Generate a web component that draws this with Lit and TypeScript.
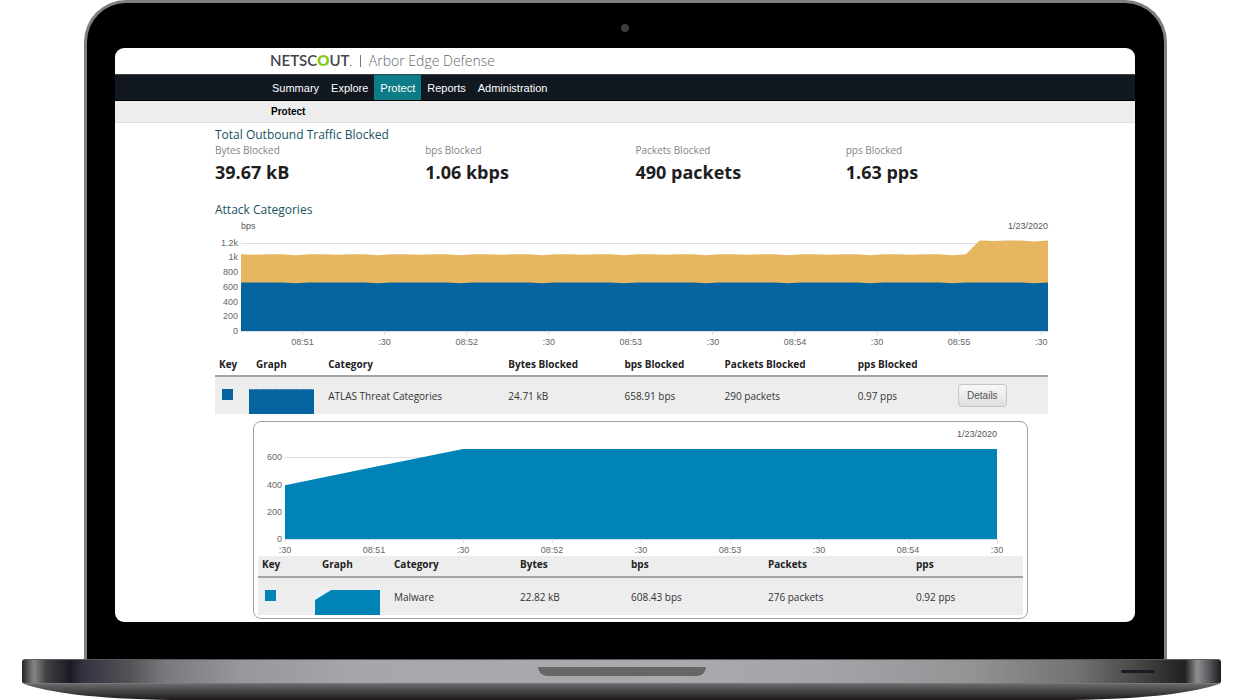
import { LitElement, html, svg, css } from "lit";
import { customElement, property } from "lit/decorators.js";

interface Series {
  color: string;
  values: number[];
}

interface Tick {
  at: number;
  label: string;
}

const NAVY = "#0563a0";
const AMBER = "#e6b660";
const AZURE = "#0083b7";

/* One sample every five seconds; each sixth sample dips a little. */
const atlas = Array.from({ length: 60 }, (_, i) => (i % 6 === 4 ? 646 : 658));
const total = Array.from({ length: 60 }, (_, i) => {
  const base = i >= 54 ? 1226 : 1038;
  return base + (i % 6 === 4 ? -12 : i % 3 === 1 ? -4 : 2);
});
const malware = [395, 528, 661, 661, 661, 661, 661, 661, 661];

function clock(count: number, startMinute: number, onHalf: boolean): string[] {
  const labels: string[] = [];
  let minute = startMinute;
  let half = onHalf;
  for (let i = 0; i < count; i++) {
    if (half) {
      labels.push(":30");
      minute++;
    } else {
      labels.push(`08:${minute}`);
    }
    half = !half;
  }
  return labels;
}

const outboundTicks: Tick[] = clock(10, 51, false).map((label, i) => ({
  label,
  at: (4.5 + i * 6) / 59,
}));
const malwareTicks: Tick[] = clock(9, 50, true).map((label, i) => ({
  label,
  at: i / 8,
}));

function areaPath(values: number[], max: number): string {
  const step = 1000 / (values.length - 1);
  const points = values.map(
    (v, i) => `${(i * step).toFixed(2)} ${(1000 - (v / max) * 1000).toFixed(2)}`
  );
  return `M0 1000L${points.join("L")}L1000 1000Z`;
}

@customElement("area-chart")
class AreaChart extends LitElement {
  static styles = css`
    :host {
      display: block;
      font: 9px/12px "Liberation Sans", Arial, sans-serif;
      color: #555;
    }
    .head {
      display: flex;
      justify-content: space-between;
      height: 20px;
    }
    .plot {
      display: block;
      width: 100%;
      overflow: visible;
    }
    .label {
      fill: #666;
    }
    .end {
      text-anchor: end;
    }
    .middle {
      text-anchor: middle;
    }
    .grid {
      stroke: #dedede;
      shape-rendering: crispEdges;
    }
  `;

  @property() unit = "";
  @property() date = "";
  @property({ type: Number }) max = 100;
  @property({ type: Number }) height = 91;
  @property({ attribute: false }) series: Series[] = [];
  @property({ attribute: false }) levels: Tick[] = [];
  @property({ attribute: false }) ticks: Tick[] = [];

  render() {
    const h = this.height;
    const y = (v: number) => Math.round(h - (v / this.max) * h);
    return html`
      <div class="head"><span>${this.unit}</span><span>${this.date}</span></div>
      <svg class="plot" height=${h + 17} role="img" aria-label="Traffic over time">
        ${this.levels.map(
          (l) => svg`
            <line class="grid" x1="0" x2="100%" y1=${y(l.at)} y2=${y(l.at)} />
            <text class="label end" x="-3" y=${y(l.at) + 3}>${l.label}</text>`
        )}
        <svg width="100%" height=${h} viewBox="0 0 1000 1000" preserveAspectRatio="none">
          ${this.series.map(
            (s) => svg`<path fill=${s.color} d=${areaPath(s.values, this.max)} />`
          )}
        </svg>
        ${this.ticks.map(
          (t) => svg`
            <line class="grid" x1="${t.at * 100}%" x2="${t.at * 100}%" y1=${h} y2=${h + 4} />
            <text class="label middle" x="${t.at * 100}%" y=${h + 14}>${t.label}</text>`
        )}
      </svg>
    `;
  }
}

@customElement("app-root")
class AppRoot extends LitElement {
  static styles = css`
    :host {
      display: block;
      background: #fff;
      font: 11px/16px "Open Sans", "Noto Sans", sans-serif;
      color: #333;
      overflow: hidden;
    }
    * {
      box-sizing: border-box;
    }
    .laptop {
      margin: 0 24px 0 22px;
    }
    .lid {
      margin: 0 54px 0 62px;
      padding: 0 29px 37px 28px;
      background: #000;
      border: 3px solid #808080;
      border-bottom: 0;
      border-radius: 42px 42px 0 0;
    }
    .bezel {
      display: flex;
      justify-content: center;
      align-items: center;
      height: 45px;
      padding-top: 4px;
    }
    .camera {
      width: 8px;
      height: 8px;
      border-radius: 50%;
      background: #3c3c3e;
    }
    .screen {
      background: #fff;
      border-radius: 9px;
      overflow: hidden;
      padding-bottom: 3px;
    }
    .brand {
      display: flex;
      align-items: center;
      gap: 8px;
      height: 26px;
      padding-left: 155px;
      font-size: 14px;
      line-height: 26px;
      color: #65686b;
    }
    .logo {
      font-family: Lato, "Open Sans", sans-serif;
      font-size: 15px;
      font-weight: 600;
      color: #3f464c;
    }
    .logo-o {
      color: #84cc16;
      font-weight: 800;
    }
    .logo-mark {
      font-size: 10px;
      font-weight: 400;
    }
    .rule {
      width: 1px;
      height: 12px;
      background: #777;
    }
    .product {
      font-weight: 300;
    }
    .nav {
      display: flex;
      height: 27px;
      padding-left: 151px;
      background: #111820;
      border-top: 1px solid #3a4046;
      border-bottom: 1px solid #000;
      font: 11px/26px "Liberation Sans", Arial, sans-serif;
    }
    .nav-link {
      padding: 0 6px;
      color: #fff;
      text-decoration: none;
    }
    .nav-link.active {
      background: #0c7d87;
    }
    .crumb {
      height: 22px;
      padding-left: 156px;
      background: #ededed;
      border-bottom: 1px solid #dfdfdf;
      font: bold 10px/21px "Liberation Sans", Arial, sans-serif;
      color: #000;
    }
    .content {
      padding: 4px 87px 0 100px;
    }
    .title {
      margin: 0;
      font-size: 12px;
      font-weight: 400;
      line-height: 16px;
      color: #17535f;
    }
    .stats {
      display: grid;
      grid-template-columns: repeat(4, 1fr);
      margin: 0 -8px 15px 0;
    }
    .stat-name {
      font-size: 10px;
      line-height: 14px;
      color: #848484;
    }
    .stat-value {
      margin: 0;
      font-size: 18px;
      font-weight: 700;
      line-height: 30px;
      color: #1e1e1e;
    }
    .main-chart {
      margin: 2px 0 4px 26px;
    }
    .data {
      width: 100%;
      border-collapse: collapse;
      table-layout: fixed;
      font-size: 10px;
    }
    .data th {
      height: 24px;
      padding: 0 0 0 4px;
      text-align: left;
      font-weight: 700;
      color: #222;
      border-bottom: 2px solid #a4a4a4;
    }
    .data td {
      height: 38px;
      padding: 0 0 0 4px;
      background: #ededed;
      white-space: nowrap;
    }
    .data th.graph {
      padding-left: 11px;
    }
    .w30 { width: 30px; }
    .w53 { width: 53px; }
    .w79 { width: 79px; }
    .w94 { width: 94px; }
    .w100 { width: 100px; }
    .w111 { width: 111px; }
    .w116 { width: 116px; }
    .w126 { width: 126px; }
    .w133 { width: 133px; }
    .w137 { width: 137px; }
    .w148 { width: 148px; }
    .w180 { width: 180px; }
    .swatch {
      display: block;
      width: 11px;
      height: 11px;
      margin: 0 0 3px 3px;
    }
    .swatch.navy {
      background: #0563a0;
    }
    .swatch.azure {
      background: #0083b7;
    }
    .spark {
      display: block;
      width: 65px;
      height: 25px;
      margin-top: 11px;
    }
    .details {
      display: block;
      width: 49px;
      height: 23px;
      padding: 0;
      border: 1px solid #c4c4c4;
      border-radius: 4px;
      background: linear-gradient(#f9f9f9, #dedede);
      font: 10px/20px "Liberation Sans", Arial, sans-serif;
      color: #555;
    }
    .panel {
      margin: 7px 20px 0 38px;
      padding: 6px 4px 3px;
      border: 1px solid #a2a2a2;
      border-radius: 8px;
    }
    .panel-chart {
      margin: 0 26px 0 27px;
    }
    .panel th {
      height: 21px;
      background: #ededed;
      line-height: 14px;
      padding-bottom: 4px;
    }
    .deck {
      display: flex;
      align-items: center;
      height: 25px;
      border-top: 1px solid #5b595d;
      border-bottom: 1px solid #77787a;
      border-radius: 3px;
      background: linear-gradient(
        90deg,
        #252223 0%,
        #858588 1%,
        #444244 2%,
        #1c1a24 4%,
        #333140 5%,
        #545356 9%,
        #7a797d 12%,
        #96979b 18%,
        #a6a7ab 28%,
        #a9aaae 55%,
        #a3a4a7 67%,
        #929496 79%,
        #717273 88%,
        #50504e 92%,
        #22211f 97%,
        #8e8e93 98%,
        #5a585b 99%,
        #1f1c1d 100%
      );
    }
    .deck-side {
      flex: 1;
      display: flex;
      justify-content: flex-end;
      padding-right: 66px;
    }
    .notch {
      align-self: flex-start;
      width: 168px;
      height: 9px;
      margin-top: 7px;
      border-radius: 0 0 9px 9px;
      background: #666;
    }
    .slot {
      width: 34px;
      height: 3px;
      border-radius: 2px;
      background: #1c1a24;
    }
    .belly {
      display: block;
      width: 100%;
      height: 16px;
    }
  `;

  private stat(name: string, value: string) {
    return html`<div>
      <div class="stat-name">${name}</div>
      <p class="stat-value">${value}</p>
    </div>`;
  }

  private spark(values: number[], max: number, color: string, back: string) {
    return html`<svg class="spark" viewBox="0 0 1000 1000" preserveAspectRatio="none" aria-hidden="true">
      <rect width="1000" height="1000" fill=${back} />
      <path fill=${color} d=${areaPath(values, max)} />
    </svg>`;
  }

  render() {
    const levels: Tick[] = [
      { at: 1200, label: "1.2k" },
      { at: 1000, label: "1k" },
      { at: 800, label: "800" },
      { at: 600, label: "600" },
      { at: 400, label: "400" },
      { at: 200, label: "200" },
      { at: 0, label: "0" },
    ];
    return html`
      <div class="laptop">
        <div class="lid">
          <div class="bezel"><span class="camera"></span></div>
          <div class="screen">
            <header>
              <div class="brand">
                <span class="logo">NETSC<span class="logo-o">O</span>UT<span class="logo-mark">.</span></span>
                <span class="rule"></span>
                <span class="product">Arbor Edge Defense</span>
              </div>
              <nav class="nav">
                <a class="nav-link" href="#summary">Summary</a>
                <a class="nav-link" href="#explore">Explore</a>
                <a class="nav-link active" href="#protect" aria-current="page">Protect</a>
                <a class="nav-link" href="#reports">Reports</a>
                <a class="nav-link" href="#administration">Administration</a>
              </nav>
              <div class="crumb">Protect</div>
            </header>
            <main class="content">
              <h2 class="title">Total Outbound Traffic Blocked</h2>
              <div class="stats">
                ${this.stat("Bytes Blocked", "39.67 kB")}
                ${this.stat("bps Blocked", "1.06 kbps")}
                ${this.stat("Packets Blocked", "490 packets")}
                ${this.stat("pps Blocked", "1.63 pps")}
              </div>
              <h2 class="title">Attack Categories</h2>
              <area-chart
                class="main-chart"
                unit="bps"
                date="1/23/2020"
                max="1234"
                height="91"
                .series=${[
                  { color: AMBER, values: total },
                  { color: NAVY, values: atlas },
                ]}
                .levels=${levels}
                .ticks=${outboundTicks}
              ></area-chart>
              <table class="data">
                <colgroup>
                  <col class="w30" /><col class="w79" /><col class="w180" /><col class="w116" />
                  <col class="w100" /><col class="w133" /><col class="w100" /><col class="w94" />
                </colgroup>
                <thead>
                  <tr>
                    <th>Key</th>
                    <th class="graph">Graph</th>
                    <th>Category</th>
                    <th>Bytes Blocked</th>
                    <th>bps Blocked</th>
                    <th>Packets Blocked</th>
                    <th>pps Blocked</th>
                    <th></th>
                  </tr>
                </thead>
                <tbody>
                  <tr>
                    <td><span class="swatch navy"></span></td>
                    <td>${this.spark(atlas, 662, NAVY, "#d5e5ef")}</td>
                    <td>ATLAS Threat Categories</td>
                    <td>24.71 kB</td>
                    <td>658.91 bps</td>
                    <td>290 packets</td>
                    <td>0.97 pps</td>
                    <td><button class="details" type="button">Details</button></td>
                  </tr>
                </tbody>
              </table>
              <section class="panel">
                <area-chart
                  class="panel-chart"
                  date="1/23/2020"
                  max="668"
                  height="91"
                  .series=${[{ color: AZURE, values: malware }]}
                  .levels=${levels.slice(3)}
                  .ticks=${malwareTicks}
                ></area-chart>
                <table class="data">
                  <colgroup>
                    <col class="w53" /><col class="w79" /><col class="w126" /><col class="w111" />
                    <col class="w137" /><col class="w148" /><col class="w111" />
                  </colgroup>
                  <thead>
                    <tr>
                      <th>Key</th>
                      <th class="graph">Graph</th>
                      <th>Category</th>
                      <th>Bytes</th>
                      <th>bps</th>
                      <th>Packets</th>
                      <th>pps</th>
                    </tr>
                  </thead>
                  <tbody>
                    <tr>
                      <td><span class="swatch azure"></span></td>
                      <td>${this.spark(malware, 661, AZURE, "#e6f3f8")}</td>
                      <td>Malware</td>
                      <td>22.82 kB</td>
                      <td>608.43 bps</td>
                      <td>276 packets</td>
                      <td>0.92 pps</td>
                    </tr>
                  </tbody>
                </table>
              </section>
            </main>
          </div>
        </div>
        <div class="deck">
          <span class="deck-side"></span>
          <span class="notch"></span>
          <span class="deck-side"><span class="slot"></span></span>
        </div>
        <svg class="belly" viewBox="0 0 1200 16" preserveAspectRatio="none" aria-hidden="true">
          <defs>
            <linearGradient id="belly" x1="0" y1="0" x2="0" y2="1">
              <stop offset="0" stop-color="#69686a" />
              <stop offset="1" stop-color="#1d191b" />
            </linearGradient>
          </defs>
          <path fill="url(#belly)" d="M2 0C25 8 70 15 150 16H1050C1130 15 1175 8 1198 0Z" />
        </svg>
      </div>
    `;
  }
}
